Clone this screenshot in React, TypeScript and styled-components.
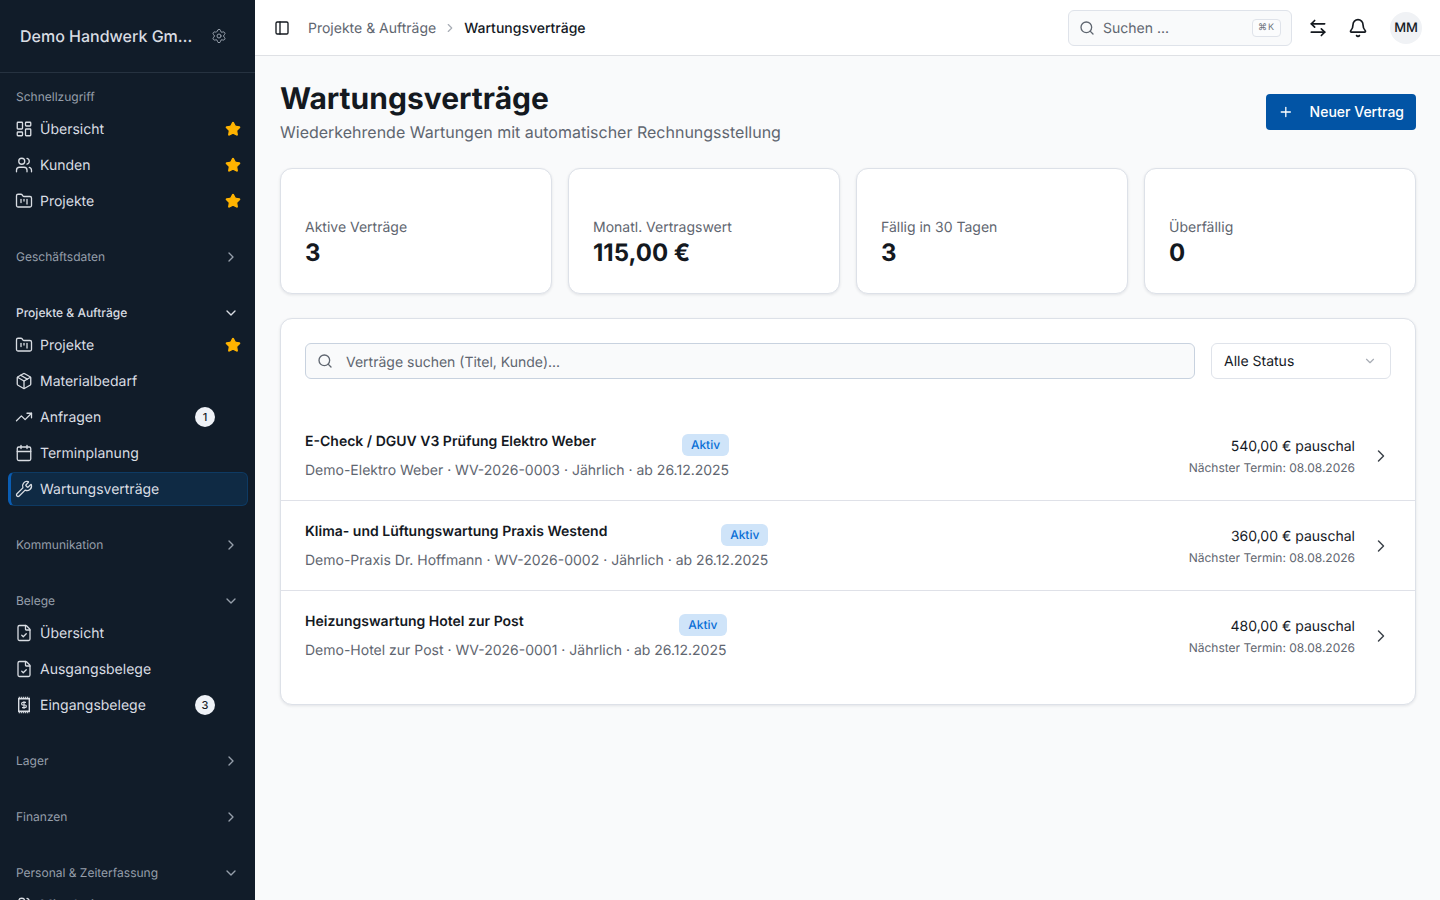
import React from 'react';
import styled, { createGlobalStyle } from 'styled-components';
import {
  ArrowLeftRight,
  Bell,
  Calendar,
  ChevronDown,
  ChevronRight,
  FileCheck,
  FolderKanban,
  LayoutDashboard,
  Package,
  PanelLeft,
  Plus,
  Search,
  Settings,
  Star,
  TrendingUp,
  Users,
  Wrench,
} from 'lucide-react';

const GlobalStyle = createGlobalStyle`
  html, body {
    margin: 0;
    height: 100%;
    overflow: hidden;
    background: #f9fafb;
    font-family: Inter, "Liberation Sans", sans-serif;
    color: #14191f;
    text-rendering: geometricPrecision;
  }
  * {
    box-sizing: border-box;
  }
`;

const Shell = styled.div`
  display: flex;
  height: 900px;
  width: 1440px;
  overflow: hidden;
`;

const Sidebar = styled.aside`
  flex: 0 0 255px;
  height: 900px;
  overflow: hidden;
  background: #111c29;
  color: #d9dde3;
`;

const Brand = styled.div`
  height: 73px;
  padding: 0 20px;
  display: flex;
  align-items: center;
  gap: 18px;
  border-bottom: 1px solid #263240;
`;

const BrandName = styled.span`
  width: 173px;
  font-size: 16px;
  font-weight: 500;
  white-space: nowrap;
  overflow: hidden;
  text-overflow: ellipsis;
`;

const Nav = styled.nav`
  padding: 8px 7px 0 8px;
`;

const Group = styled.section<{ $collapsed?: boolean }>`
  padding-bottom: ${(p) => (p.$collapsed ? '26px' : '22px')};
`;

const GroupTitle = styled.div<{ $active?: boolean }>`
  height: 30px;
  padding: 0 9px 0 8px;
  display: flex;
  align-items: center;
  justify-content: space-between;
  font-size: 12px;
  font-weight: ${(p) => (p.$active ? 500 : 400)};
  color: ${(p) => (p.$active ? '#d9dde3' : '#969fab')};

  svg {
    margin-top: 2px;
  }
`;

const Item = styled.div<{ $active?: boolean }>`
  height: ${(p) => (p.$active ? '34px' : '36px')};
  margin: ${(p) => (p.$active ? '1px 0' : '0')};
  padding: 0 7px;
  display: flex;
  align-items: center;
  gap: 7px;
  font-size: 14px;
  color: #d9dde3;
  border-radius: 6px;
  background: ${(p) => (p.$active ? '#0f2a44' : 'transparent')};
  border: ${(p) => (p.$active ? '1px solid #0e3a63' : 'none')};
  border-left: ${(p) => (p.$active ? '3px solid #0a5db3' : 'none')};
  padding-left: ${(p) => (p.$active ? '4px' : '7px')};
`;

const ItemLabel = styled.span`
  flex: 1;
  white-space: nowrap;
`;

const CountBadge = styled.span`
  width: 20px;
  height: 20px;
  margin-right: 26px;
  border-radius: 50%;
  background: #eff2f7;
  color: #14191f;
  display: flex;
  align-items: center;
  justify-content: center;
  font-size: 11px;
  font-weight: 500;
`;

const Fav = styled(Star)`
  color: #ffb300;
  fill: #ffb300;
`;

const Main = styled.main`
  flex: 1;
  min-width: 0;
  display: flex;
  flex-direction: column;
`;

const Topbar = styled.header`
  height: 56px;
  padding: 0 18px 0 19px;
  display: flex;
  align-items: center;
  background: #ffffff;
  border-bottom: 1px solid #dfe1e5;
`;

const Crumbs = styled.div`
  flex: 1;
  margin-left: 18px;
  display: flex;
  align-items: center;
  gap: 7px;
  font-size: 14px;
  line-height: 20px;
  color: #5f6670;

  svg {
    color: #a8adb5;
  }
`;

const Crumb = styled.span<{ $current?: boolean }>`
  padding-top: 2px;
  font-weight: ${(p) => (p.$current ? 500 : 400)};
  color: ${(p) => (p.$current ? '#14191f' : '#5f6670')};
`;

const TopSearch = styled.div`
  width: 224px;
  height: 36px;
  padding: 0 10px;
  display: flex;
  align-items: center;
  gap: 8px;
  background: #f9fafb;
  border: 1px solid #dfe3ea;
  border-radius: 6px;
  font-size: 14px;
  line-height: 20px;
  color: #5f6670;
`;

const TopSearchText = styled.span`
  flex: 1;
  padding-top: 2px;
`;

const Kbd = styled.span`
  width: 29px;
  height: 18px;
  display: flex;
  align-items: center;
  justify-content: center;
  font-size: 9px;
  letter-spacing: 1px;
  color: #6a717b;
  background: #fbfcfd;
  border: 1px solid #dfe3ea;
  border-radius: 4px;
`;

const TopIcons = styled.div`
  margin-left: 16px;
  display: flex;
  align-items: center;
  gap: 20px;
  color: #14191f;
`;

const Avatar = styled.div`
  width: 32px;
  height: 32px;
  margin-left: 22px;
  border-radius: 50%;
  background: #f0f2f5;
  display: flex;
  align-items: center;
  justify-content: center;
  font-size: 13px;
  font-weight: 500;
`;

const Content = styled.div`
  padding: 24px 24px 0 25px;
  display: flex;
  flex-direction: column;
  background: #f9fafb;
  flex: 1;
`;

const PageHead = styled.div`
  display: flex;
  align-items: center;
  justify-content: space-between;
  margin-bottom: 24px;
`;

const PageTitle = styled.h1`
  margin: 0;
  font-size: 30px;
  line-height: 38px;
  font-weight: 700;
  color: #14191f;
`;

const PageSub = styled.p`
  margin: 2px 0 0;
  font-size: 16px;
  line-height: 24px;
  color: #5f6670;
`;

const PrimaryButton = styled.button`
  height: 36px;
  width: 150px;
  padding: 0 12px;
  display: flex;
  align-items: center;
  gap: 16px;
  border: none;
  border-radius: 4px;
  background: #0254a5;
  color: #ffffff;
  font-family: inherit;
  font-size: 14px;
  line-height: 20px;
  font-weight: 500;
  white-space: nowrap;
`;

const Stats = styled.div`
  display: grid;
  grid-template-columns: repeat(4, 272px);
  gap: 16px;
  margin-bottom: 24px;
`;

const Card = styled.div`
  background: #ffffff;
  border: 1px solid #dde1e8;
  border-radius: 12px;
  box-shadow: 0 1px 3px rgba(20, 30, 50, 0.1);
`;

const StatCard = styled(Card)`
  height: 126px;
  padding: 0 24px 25px;
  display: flex;
  flex-direction: column;
  justify-content: flex-end;
`;

const StatLabel = styled.div`
  font-size: 14px;
  line-height: 20px;
  color: #5f6670;
`;

const StatValue = styled.div`
  font-size: 24px;
  line-height: 30px;
  font-weight: 700;
  color: #14191f;
`;

const ListCard = styled(Card)`
  padding: 24px 0 23px;
`;

const Filters = styled.div`
  padding: 0 24px;
  margin-bottom: 32px;
  display: flex;
  gap: 16px;
`;

const FilterSearch = styled.div`
  flex: 1;
  height: 36px;
  padding: 0 11px;
  display: flex;
  align-items: center;
  gap: 13px;
  background: #f9fafb;
  border: 1px solid #c8d2df;
  border-radius: 6px;
  font-size: 14px;
  line-height: 20px;
  color: #5f6670;
`;

const FilterHint = styled.span`
  padding-top: 4px;
`;

const FilterSelect = styled.div`
  width: 180px;
  height: 36px;
  padding: 0 13px 0 12px;
  display: flex;
  align-items: center;
  justify-content: space-between;
  background: #ffffff;
  border: 1px solid #dfe3ea;
  border-radius: 6px;
  font-size: 14px;
  color: #14191f;

  svg {
    color: #a8adb5;
  }
`;

const Row = styled.div<{ $last?: boolean }>`
  height: 90px;
  padding: 0 24px;
  display: flex;
  align-items: center;
  justify-content: space-between;
  border-bottom: 1px solid ${(p) => (p.$last ? 'transparent' : '#dfe1e8')};
`;

const RowMain = styled.div`
  display: flex;
  flex-direction: column;
  gap: 7px;
`;

const RowHead = styled.div`
  display: flex;
  align-items: flex-start;
  justify-content: space-between;
  height: 24px;
`;

const RowTitle = styled.span`
  margin-top: 2px;
  font-size: 14px;
  line-height: 20px;
  font-weight: 600;
  color: #14191f;
`;

const StatusBadge = styled.span`
  margin-top: 4px;
  height: 22px;
  padding: 0 9px;
  display: flex;
  align-items: center;
  font-size: 12px;
  line-height: 16px;
  font-weight: 500;
  color: #0a6fd6;
  background: #cfe4f9;
  border-radius: 6px;
`;

const RowMeta = styled.span`
  font-size: 14px;
  line-height: 20px;
  color: #5f6670;
`;

const RowSide = styled.div`
  display: flex;
  align-items: center;
  gap: 16px;
`;

const RowAmounts = styled.div`
  padding-top: 2px;
  text-align: right;
`;

const Amount = styled.div`
  font-size: 14px;
  line-height: 20px;
  color: #14191f;
`;

const NextDate = styled.div`
  margin-top: 3px;
  font-size: 12px;
  line-height: 16px;
  color: #5f6670;
`;

const RowChevron = styled(ChevronRight)`
  color: #3c424a;
`;

// no matching lucide glyph for the perforated receipt
const ReceiptIcon: React.FC = function () {
  return (
    <svg width="18" height="18" viewBox="0 0 18 18" fill="none" stroke="currentColor" strokeWidth="1.4">
      <path d="M3.7 1.5h10.6M3.7 16.5h10.6" strokeDasharray="1.2 0.8" />
      <path d="M3.7 2.8h10.6v12.4H3.7z" />
      <path
        d="M11 6.3H8a1.35 1.35 0 0 0 0 2.7h2a1.35 1.35 0 0 1 0 2.7H7M9 5.2v7.6"
        strokeWidth="1.2"
      />
    </svg>
  );
};

const contracts = [
  {
    title: 'E-Check / DGUV V3 Prüfung Elektro Weber',
    meta: 'Demo-Elektro Weber · WV-2026-0003 · Jährlich · ab 26.12.2025',
    amount: '540,00 € pauschal',
  },
  {
    title: 'Klima- und Lüftungswartung Praxis Westend',
    meta: 'Demo-Praxis Dr. Hoffmann · WV-2026-0002 · Jährlich · ab 26.12.2025',
    amount: '360,00 € pauschal',
  },
  {
    title: 'Heizungswartung Hotel zur Post',
    meta: 'Demo-Hotel zur Post · WV-2026-0001 · Jährlich · ab 26.12.2025',
    amount: '480,00 € pauschal',
  },
];

const stats = [
  { label: 'Aktive Verträge', value: '3' },
  { label: 'Monatl. Vertragswert', value: '115,00 €' },
  { label: 'Fällig in 30 Tagen', value: '3' },
  { label: 'Überfällig', value: '0' },
];

const App: React.FC = function () {
  const ic = { size: 18, strokeWidth: 1.75 };
  const chev = { size: 16, strokeWidth: 2 };

  return (
    <Shell>
      <GlobalStyle />
      <Sidebar>
        <Brand>
          <BrandName>Demo Handwerk GmbH &amp; Co. KG</BrandName>
          <Settings size={16} strokeWidth={1.5} color="#969fab" />
        </Brand>
        <Nav>
          <Group>
            <GroupTitle>Schnellzugriff</GroupTitle>
            <Item>
              <LayoutDashboard {...ic} />
              <ItemLabel>Übersicht</ItemLabel>
              <Fav size={16} />
            </Item>
            <Item>
              <Users {...ic} />
              <ItemLabel>Kunden</ItemLabel>
              <Fav size={16} />
            </Item>
            <Item>
              <FolderKanban {...ic} />
              <ItemLabel>Projekte</ItemLabel>
              <Fav size={16} />
            </Item>
          </Group>
          <Group $collapsed>
            <GroupTitle>
              Geschäftsdaten
              <ChevronRight {...chev} />
            </GroupTitle>
          </Group>
          <Group>
            <GroupTitle $active>
              Projekte &amp; Aufträge
              <ChevronDown {...chev} />
            </GroupTitle>
            <Item>
              <FolderKanban {...ic} />
              <ItemLabel>Projekte</ItemLabel>
              <Fav size={16} />
            </Item>
            <Item>
              <Package {...ic} />
              <ItemLabel>Materialbedarf</ItemLabel>
            </Item>
            <Item>
              <TrendingUp {...ic} />
              <ItemLabel>Anfragen</ItemLabel>
              <CountBadge>1</CountBadge>
            </Item>
            <Item>
              <Calendar {...ic} />
              <ItemLabel>Terminplanung</ItemLabel>
            </Item>
            <Item $active>
              <Wrench {...ic} />
              <ItemLabel>Wartungsverträge</ItemLabel>
            </Item>
          </Group>
          <Group $collapsed>
            <GroupTitle>
              Kommunikation
              <ChevronRight {...chev} />
            </GroupTitle>
          </Group>
          <Group>
            <GroupTitle>
              Belege
              <ChevronDown {...chev} />
            </GroupTitle>
            <Item>
              <FileCheck {...ic} />
              <ItemLabel>Übersicht</ItemLabel>
            </Item>
            <Item>
              <FileCheck {...ic} />
              <ItemLabel>Ausgangsbelege</ItemLabel>
            </Item>
            <Item>
              <ReceiptIcon />
              <ItemLabel>Eingangsbelege</ItemLabel>
              <CountBadge>3</CountBadge>
            </Item>
          </Group>
          <Group $collapsed>
            <GroupTitle>
              Lager
              <ChevronRight {...chev} />
            </GroupTitle>
          </Group>
          <Group $collapsed>
            <GroupTitle>
              Finanzen
              <ChevronRight {...chev} />
            </GroupTitle>
          </Group>
          <Group>
            <GroupTitle>
              Personal &amp; Zeiterfassung
              <ChevronDown {...chev} />
            </GroupTitle>
            <Item>
              <Users {...ic} />
              <ItemLabel>Mitarbeiter</ItemLabel>
            </Item>
          </Group>
        </Nav>
      </Sidebar>
      <Main>
        <Topbar>
          <PanelLeft size={16} strokeWidth={2} />
          <Crumbs>
            <Crumb>Projekte &amp; Aufträge</Crumb>
            <ChevronRight size={14} />
            <Crumb $current>Wartungsverträge</Crumb>
          </Crumbs>
          <TopSearch>
            <Search size={16} strokeWidth={2} />
            <TopSearchText>Suchen ...</TopSearchText>
            <Kbd>⌘K</Kbd>
          </TopSearch>
          <TopIcons>
            <ArrowLeftRight size={20} strokeWidth={2} />
            <Bell size={20} strokeWidth={2} />
          </TopIcons>
          <Avatar>MM</Avatar>
        </Topbar>
        <Content>
          <PageHead>
            <div>
              <PageTitle>Wartungsverträge</PageTitle>
              <PageSub>Wiederkehrende Wartungen mit automatischer Rechnungsstellung</PageSub>
            </div>
            <PrimaryButton>
              <Plus size={16} />
              Neuer Vertrag
            </PrimaryButton>
          </PageHead>
          <Stats>
            {stats.map((stat) => (
              <StatCard key={stat.label}>
                <StatLabel>{stat.label}</StatLabel>
                <StatValue>{stat.value}</StatValue>
              </StatCard>
            ))}
          </Stats>
          <ListCard>
            <Filters>
              <FilterSearch>
                <Search size={16} strokeWidth={2} />
                <FilterHint>Verträge suchen (Titel, Kunde)...</FilterHint>
              </FilterSearch>
              <FilterSelect>
                Alle Status
                <ChevronDown size={14} />
              </FilterSelect>
            </Filters>
            {contracts.map((contract, index) => (
              <Row key={contract.meta} $last={index === contracts.length - 1}>
                <RowMain>
                  <RowHead>
                    <RowTitle>{contract.title}</RowTitle>
                    <StatusBadge>Aktiv</StatusBadge>
                  </RowHead>
                  <RowMeta>{contract.meta}</RowMeta>
                </RowMain>
                <RowSide>
                  <RowAmounts>
                    <Amount>{contract.amount}</Amount>
                    <NextDate>Nächster Termin: 08.08.2026</NextDate>
                  </RowAmounts>
                  <RowChevron size={20} strokeWidth={1.75} />
                </RowSide>
              </Row>
            ))}
          </ListCard>
        </Content>
      </Main>
    </Shell>
  );
};

export default App;
